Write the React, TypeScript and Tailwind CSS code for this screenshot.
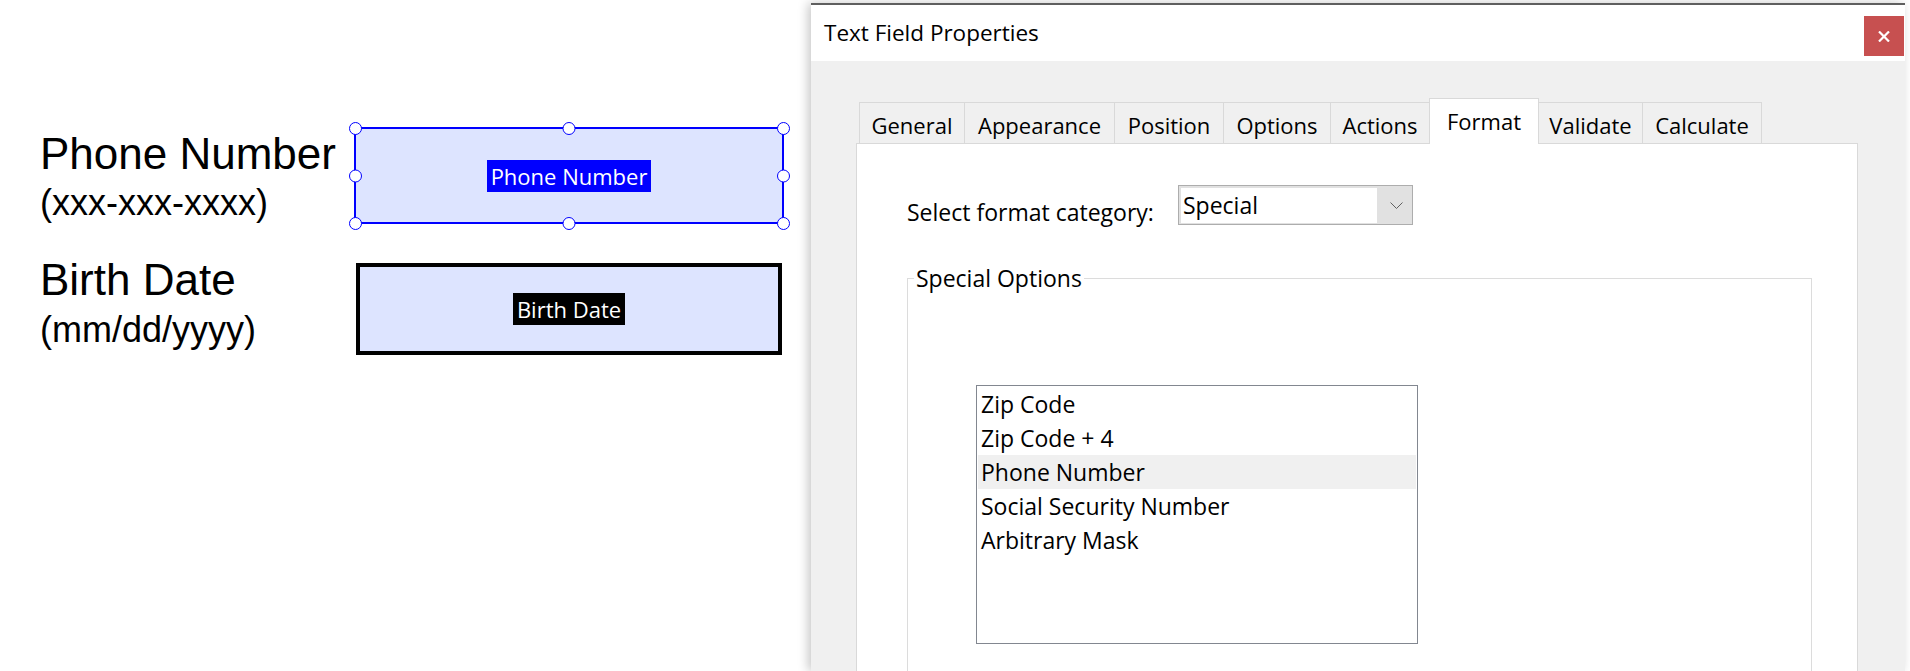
import React from "react";

const tabs: { label: string; w: string; cls: string }[] = [
  { label: "General", w: "w-[105px]", cls: "border-l" },
  { label: "Appearance", w: "w-[150px]", cls: "border-l" },
  { label: "Position", w: "w-[109px]", cls: "border-l" },
  { label: "Options", w: "w-[107px]", cls: "border-l" },
  { label: "Actions", w: "w-[99px]", cls: "border-l" },
  { label: "Format", w: "w-[110px]", cls: "border-l border-r" },
  { label: "Validate", w: "w-[103px]", cls: "" },
  { label: "Calculate", w: "w-[120px]", cls: "border-l border-r" },
];

const items = [
  "Zip Code",
  "Zip Code + 4",
  "Phone Number",
  "Social Security Number",
  "Arbitrary Mask",
];

function Handle({ cls }: { cls: string }) {
  return (
    <span
      className={`absolute w-[13px] h-[13px] rounded-full bg-white border-[1.5px] border-[#0000ff] ${cls}`}
    />
  );
}

export default function App() {
  return (
    <div className="w-[1910px] h-[671px] bg-white flex overflow-hidden text-black">
      {/* Left: form canvas */}
      <div className="w-[811px] shrink-0 pt-[127px] font-['Liberation_Sans',Arial,sans-serif]">
        <div className="flex">
          <div className="w-[354px] shrink-0 pl-[40px] pt-[5px]">
            <div className="text-[44px] leading-[44px]">Phone Number</div>
            <div className="text-[36px] leading-[36px] mt-[9px]">(xxx-xxx-xxxx)</div>
          </div>
          <div className="relative w-[430px] h-[97px] border-2 border-[#0000ff] bg-[#dde4ff] flex items-center justify-center">
            <span className="bg-[#0000ff] text-white text-[22px] leading-[32px] px-[4px] font-['Open_Sans',sans-serif]">
              Phone Number
            </span>
            <Handle cls="-left-[7.5px] -top-[7.5px]" />
            <Handle cls="left-1/2 -translate-x-1/2 -top-[7.5px]" />
            <Handle cls="-right-[7.5px] -top-[7.5px]" />
            <Handle cls="-left-[7.5px] top-1/2 -translate-y-1/2" />
            <Handle cls="-right-[7.5px] top-1/2 -translate-y-1/2" />
            <Handle cls="-left-[7.5px] -bottom-[7.5px]" />
            <Handle cls="left-1/2 -translate-x-1/2 -bottom-[7.5px]" />
            <Handle cls="-right-[7.5px] -bottom-[7.5px]" />
          </div>
        </div>
        <div className="flex mt-[34px] items-start">
          <div className="w-[354px] shrink-0 pl-[40px]">
            <div className="text-[44px] leading-[44px]">Birth Date</div>
            <div className="text-[36px] leading-[36px] mt-[10px]">(mm/dd/yyyy)</div>
          </div>
          <div className="ml-[2px] mt-[5px] w-[426px] h-[92px] border-4 border-black bg-[#dde4ff] flex items-center justify-center">
            <span className="bg-black text-white text-[22px] leading-[32px] px-[4px] font-['Open_Sans',sans-serif]">
              Birth Date
            </span>
          </div>
        </div>
      </div>

      {/* Dialog */}
      <div className="w-[1094px] shrink-0 mt-[3px] border-t-2 border-[#5f5f5f] flex flex-col shadow-[-3px_0_10px_rgba(0,0,0,0.22)] font-['Open_Sans',sans-serif]">
        <div className="h-[56px] bg-white flex justify-between items-start shrink-0">
          <div className="pl-[13px] text-[22.5px] leading-[56px]">Text Field Properties</div>
          <div className="mt-[11px] mr-[1px] w-[40px] h-[40px] bg-[#c75050] flex items-center justify-center">
            <svg width="12" height="11" viewBox="0 0 12 11">
              <path d="M1 0.5 L11 10.5 M11 0.5 L1 10.5" stroke="white" strokeWidth="2.2" />
            </svg>
          </div>
        </div>
        <div className="flex-1 bg-[#f0f0f0] pl-[45px] pr-[47px] pt-[37px] flex flex-col">
          <div className="flex items-end pl-[3px] h-[45px] shrink-0">
            {tabs.map((t) => {
              const sel = t.label === "Format";
              return (
                <div
                  key={t.label}
                  className={`${t.w} ${t.cls} border-t border-[#d9d9d9] text-center text-[22px] leading-[30px] ${
                    sel
                      ? "h-[46px] -mb-[1px] bg-white relative z-10 pt-[7px]"
                      : "h-[41px] bg-[#f0f0f0] pt-[7px]"
                  }`}
                >
                  {t.label}
                </div>
              );
            })}
          </div>
          <div className="flex-1 bg-white border border-b-0 border-[#d9d9d9] pl-[50px] pr-[45px] pt-[41px]">
            <div className="flex items-start">
              <div className="w-[271px] shrink-0 pt-[7px] text-[23px] leading-[40px]">
                Select format category:
              </div>
              <div className="w-[235px] h-[40px] border border-[#adadad] bg-[#e1e1e1] flex pt-[2px] pl-[2px] pb-[1px]">
                <div className="w-[196px] h-full bg-white text-[23px] leading-[35px] pl-[2px]">
                  Special
                </div>
                <div className="flex-1 flex items-center justify-center pl-[4px]">
                  <svg width="13" height="7" viewBox="0 0 13 7">
                    <polyline points="0.5,0.5 6.5,6.5 12.5,0.5" fill="none" stroke="#606060" strokeWidth="1" />
                  </svg>
                </div>
              </div>
            </div>
            <fieldset className="mt-[31px] border border-[#dcdcdc] h-[500px]">
              <legend className="ml-[6px] px-[2px] text-[23px] leading-[31px]">Special Options</legend>
              <div className="ml-[68px] mt-[91px] w-[442px] h-[259px] border border-[#828790] p-[1px]">
                {items.map((it) => (
                  <div
                    key={it}
                    className={`h-[34px] text-[23px] leading-[34px] pl-[3px] ${
                      it === "Phone Number" ? "bg-[#f0f0f0]" : ""
                    }`}
                  >
                    {it}
                  </div>
                ))}
              </div>
            </fieldset>
          </div>
        </div>
      </div>
    </div>
  );
}
